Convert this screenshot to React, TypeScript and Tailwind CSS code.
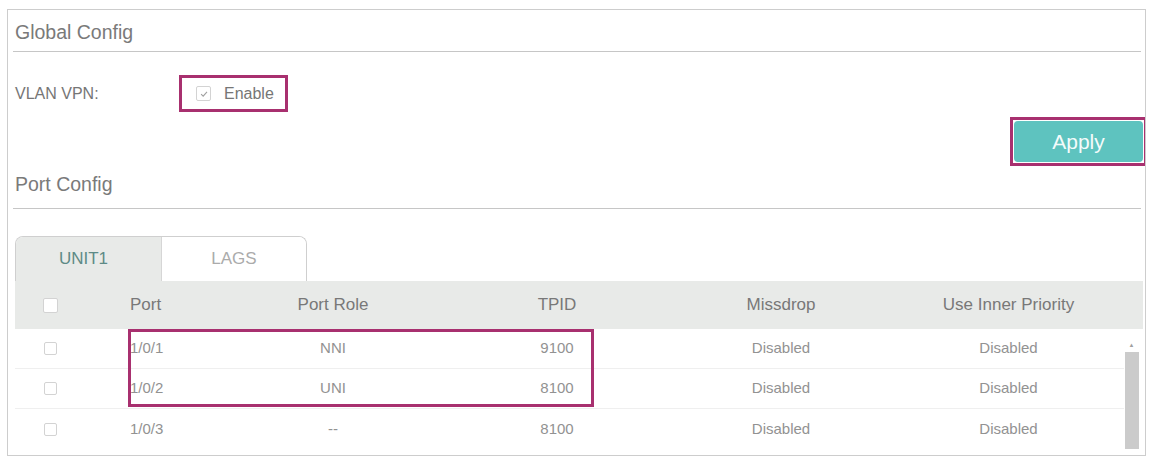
import React from "react";

const font = { fontFamily: '"Liberation Sans", Arial, sans-serif' };

function Box({ checked = false, size = "w-[14px] h-[14px]" }: { checked?: boolean; size?: string }) {
  return (
    <div className={`${size} border border-[#d3d3d3] rounded-[2px] bg-white flex items-center justify-center`}>
      {checked && (
        <svg viewBox="0 0 12 12" className="w-[10px] h-[10px]">
          <path d="M2.5 6.2 L5 8.6 L9.6 3.4" fill="none" stroke="#a0a0a0" strokeWidth="1.3" />
        </svg>
      )}
    </div>
  );
}

const rows = [
  { port: "1/0/1", role: "NNI", tpid: "9100", miss: "Disabled", uip: "Disabled" },
  { port: "1/0/2", role: "UNI", tpid: "8100", miss: "Disabled", uip: "Disabled" },
  { port: "1/0/3", role: "--", tpid: "8100", miss: "Disabled", uip: "Disabled" },
];

export default function App() {
  return (
    <div className="w-[1153px] h-[462px] bg-white pt-[9px] pl-[7px]" style={font}>
      <div className="w-[1139px] h-[447px] border border-[#cdcdcd] pl-[5px] pr-[4px] flex flex-col overflow-hidden">
        {/* Global Config */}
        <div className="h-[42px] flex items-center pt-[5px] pl-[2px] border-b border-[#c6c6c6] text-[19.5px] text-[#7a7a7a]">
          Global Config
        </div>
        <div className="mt-[23px] h-[37px] flex items-center">
          <div className="w-[166px] pl-[2px] text-[16px] text-[#767676]">VLAN VPN:</div>
          <div className="h-[37px] w-[109px] border-[3px] border-[#a8306f] flex items-center pl-[14px] gap-[13px]">
            <Box checked size="w-[15px] h-[15px]" />
            <span className="text-[16px] text-[#767676]">Enable</span>
          </div>
        </div>
        <div className="mt-[5px] flex justify-end mr-[-6px]">
          <div className="h-[49px] w-[137px] border-[3px] border-[#a8306f] p-[1px]">
            <div className="w-full h-full rounded-[4px] bg-[#5ec3bf] flex items-center justify-center text-[#f4fbfb] text-[21px]">
              Apply
            </div>
          </div>
        </div>
        {/* Port Config */}
        <div className="h-[43px] flex items-end pb-[12px] pl-[2px] border-b border-[#c6c6c6] text-[19.5px] text-[#7a7a7a]">
          <span className="leading-[24px]">Port Config</span>
        </div>
        {/* Tabs */}
        <div className="mt-[27px] ml-[2px] flex">
          <div className="flex h-[45px] border border-b-0 border-[#cfcfcf] rounded-t-[8px] overflow-hidden">
            <div className="w-[145px] bg-[#e8eae8] flex items-center justify-center pr-[10px] text-[17px] text-[#5d8a86]">
              UNIT1
            </div>
            <div className="w-[145px] bg-white border-l border-[#d6d6d6] flex items-center justify-center text-[17px] text-[#ababab]">
              LAGS
            </div>
          </div>
        </div>
        {/* Table */}
        <div className="ml-[2px] w-[1128px]">
          <div className="h-[48px] bg-[#e8eae8] flex items-center text-[17px] text-[#787878]">
            <div className="w-[70px] flex justify-center">
              <Box size="w-[15px] h-[15px]" />
            </div>
            <div className="w-[136px] pl-[45px]">Port</div>
            <div className="w-[224px] text-center">Port Role</div>
            <div className="w-[224px] text-center">TPID</div>
            <div className="w-[224px] text-center">Missdrop</div>
            <div className="w-[231px] text-center">Use Inner Priority</div>
          </div>
          <div className="relative flex">
            <div className="w-[1109px]">
              {rows.map((r, i) => (
                <div
                  key={r.port}
                  className={`h-[40px] flex items-center text-[15px] text-[#929292] ${i < 2 ? "border-b border-[#efefef]" : ""}`}
                >
                  <div className="w-[70px] flex justify-center">
                    <Box size="w-[13px] h-[13px]" />
                  </div>
                  <div className="w-[136px] pl-[45px]">{r.port}</div>
                  <div className="w-[224px] text-center">{r.role}</div>
                  <div className="w-[224px] text-center">{r.tpid}</div>
                  <div className="w-[224px] text-center">{r.miss}</div>
                  <div className="w-[231px] text-center">{r.uip}</div>
                </div>
              ))}
            </div>
            <div className="w-[15px] flex flex-col items-center">
              <div className="h-[23px] pt-[10px] flex items-center justify-center text-[6px] text-[#a0a0a0]">▲</div>
              <div className="w-[14px] flex-1 bg-[#cbcbcb]" />
            </div>
            <div className="absolute left-[113px] top-0 w-[466px] h-[78px] border-[3px] border-[#a8306f] pointer-events-none" />
          </div>
        </div>
      </div>
    </div>
  );
}
